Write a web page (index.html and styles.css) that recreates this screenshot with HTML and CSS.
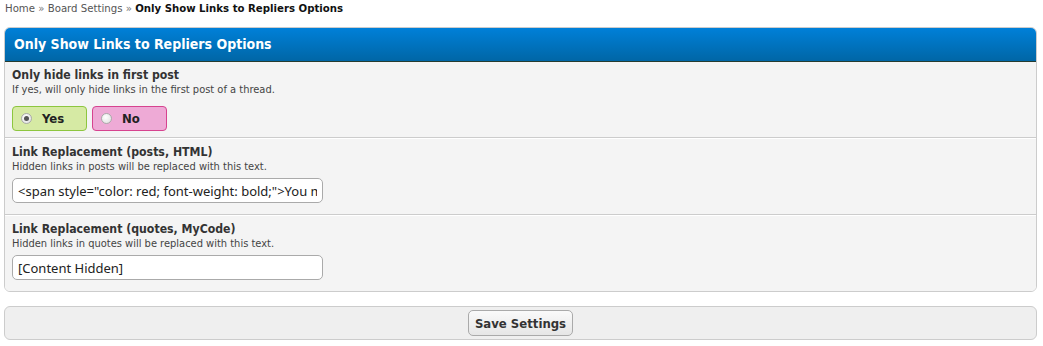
FILE: index.html
```html
<!DOCTYPE html>
<html lang="en">
<head>
	<meta charset="UTF-8">
	<title>Board Settings</title>
	<link rel="stylesheet" href="styles.css">
</head>
<body>
	<div class="nav">
		<a href="javascript:;">Home</a> &raquo; <a href="javascript:;">Board Settings</a> &raquo; <span class="active">Only Show Links to Repliers Options</span>
	</div>

	<form action="javascript:;">
		<div class="tborder">
			<div class="thead">Only Show Links to Repliers Options</div>

			<div class="trow first">
				<div class="setting-title">Only hide links in first post</div>
				<div class="setting-desc">If yes, will only hide links in the first post of a thread.</div>
				<div class="yesno">
					<label class="setting-yes"><span class="radio checked"></span>Yes</label>
					<label class="setting-no"><span class="radio"></span>No</label>
				</div>
			</div>

			<div class="trow">
				<div class="setting-title">Link Replacement (posts, HTML)</div>
				<div class="setting-desc">Hidden links in posts will be replaced with this text.</div>
				<input type="text" class="textbox" value='&lt;span style="color: red; font-weight: bold;"&gt;You must reply to see this link&lt;/span&gt;'>
			</div>

			<div class="trow last">
				<div class="setting-title">Link Replacement (quotes, MyCode)</div>
				<div class="setting-desc">Hidden links in quotes will be replaced with this text.</div>
				<input type="text" class="textbox" value="[Content Hidden]">
			</div>
		</div>

		<div class="form-buttons">
			<input type="submit" class="button" value="Save Settings">
		</div>
	</form>
</body>
</html>
```

FILE: styles.css
```css
* {padding: 0; margin: 0;}
body {
	background: #fff;
	color: #333;
	font-size: 12px;
	font-family: "DejaVu Sans Condensed", "DejaVu Sans", sans-serif;
	padding: 0 6px 0 4px;
}
a {
	color: #555;
	text-decoration: none;
}
.nav {
	padding: 2px 0 0 1px;
	height: 25px;
	line-height: 14px;
	font-size: 11.3px;
	color: #777;
}
.nav .active {
	color: #111;
	font-weight: bold;
}
.tborder {
	background: #fff;
	border: 1px solid #ccc;
	border-radius: 6px;
	overflow: hidden;
}
.thead {
	height: 33px;
	line-height: 33px;
	padding-left: 9px;
	background: linear-gradient(#0080d8, #0066a6);
	border-bottom: 1px solid #263c30;
	color: #fff;
	font-size: 14px;
	font-weight: bold;
}
.trow {
	background: #f4f4f4;
	border-top: 1px solid #fff;
	border-bottom: 1px solid #ccc;
	padding: 6px 7px 11px;
}
.trow.first {
	border-top: none;
	padding-bottom: 6px;
}
.trow.last {
	border-bottom: none;
}
.setting-title {
	font-size: 12.2px;
	font-weight: bold;
	line-height: 15px;
	color: #333;
}
.setting-desc {
	font-size: 11px;
	line-height: 13px;
	color: #444;
}
.yesno {
	display: flex;
	gap: 5px;
	margin-top: 10px;
}
.yesno label {
	display: flex;
	align-items: center;
	box-sizing: border-box;
	width: 75px;
	height: 25px;
	padding-left: 8px;
	border-radius: 4px;
	font-size: 13px;
	font-weight: bold;
	color: #222;
}
.setting-yes {
	background: #d6eaa4;
	border: 1px solid #8dc63f;
}
.setting-no {
	background: #eeaad6;
	border: 1px solid #d6438f;
}
.radio {
	box-sizing: border-box;
	width: 11px;
	height: 11px;
	margin-right: 10px;
	border: 1px solid #aaa;
	border-radius: 50%;
	background: radial-gradient(circle at 40% 35%, #fff, #ddd);
	position: relative;
}
.radio.checked::after {
	content: "";
	position: absolute;
	left: 2px;
	top: 2px;
	width: 5px;
	height: 5px;
	border-radius: 50%;
	background: #555;
}
.textbox {
	display: block;
	box-sizing: border-box;
	width: 311px;
	height: 25px;
	margin-top: 5px;
	padding: 0 5px;
	border: 1px solid #aaa;
	border-radius: 5px;
	background: #fff;
	color: #222;
	font-size: 13px;
	font-family: "Noto Sans", "Open Sans", sans-serif;
	outline: none;
}
.form-buttons {
	margin-top: 14px;
	padding: 3px 0 3px;
	background: #efefef;
	border: 1px solid #ccc;
	border-radius: 6px;
	text-align: center;
}
.button {
	height: 26px;
	padding: 0 6px;
	border: 1px solid #aaa;
	border-radius: 5px;
	background: linear-gradient(#fafafa, #e6e6e6);
	color: #333;
	font-size: 13px;
	font-weight: bold;
	font-family: "DejaVu Sans Condensed", "DejaVu Sans", sans-serif;
}
```
